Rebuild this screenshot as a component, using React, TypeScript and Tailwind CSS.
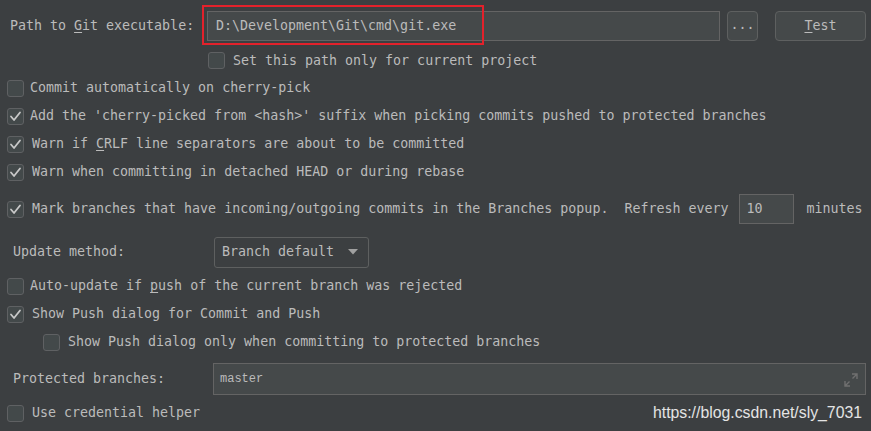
import React from 'react';

const mono = { fontFamily: '"DejaVu Sans Mono", "Liberation Mono", monospace' };

const Check: React.FC<{ checked?: boolean }> = ({ checked }) => (
  <span className="flex h-[17px] w-[17px] shrink-0 items-center justify-center rounded-[3px] border border-[#5f6163] bg-[#43494a]">
    {checked && (
      <svg width="13" height="13" viewBox="0 0 13 13">
        <path d="M2 6.5 L5 10 L11 2.5" fill="none" stroke="#c8c8c8" strokeWidth="1.8" strokeLinecap="round" strokeLinejoin="round" />
      </svg>
    )}
  </span>
);

const CheckRow: React.FC<{ checked?: boolean; gap?: string; className?: string; children: React.ReactNode }> = ({
  checked,
  gap = 'gap-[6px]',
  className = 'h-[28px] pl-[7px]',
  children,
}) => (
  <div className={`flex items-center ${gap} ${className}`}>
    <Check checked={checked} />
    <span className="whitespace-pre">{children}</span>
  </div>
);

const App: React.FC = () => {
  return (
    <div className="h-[431px] w-[871px] overflow-hidden bg-[#3c3f41] text-[13.3px] leading-none text-[#bbbbbb]" style={mono}>
      {/* git path */}
      <div className="relative mt-[11px] flex h-[30px] items-center">
        <span className="w-[207px] shrink-0 pl-[10px] whitespace-pre">
          Path to <u className="underline-offset-2">G</u>it executable:
        </span>
        <div className="flex h-[30px] w-[513px] items-center border border-[#646464] bg-[#45494a] pl-[8px]">
          D:\Development\Git\cmd\git.exe
        </div>
        <button className="ml-[7px] h-[30px] w-[31px] rounded-[4px] border border-[#5e6060] bg-[#45494a] pb-[2px] text-[#bbbbbb]">
          ...
        </button>
        <button className="ml-[17px] h-[30px] w-[91px] rounded-[4px] border border-[#5e6060] bg-[#45494a] text-[#bbbbbb]">
          <u className="underline-offset-2">T</u>est
        </button>
        <div className="absolute left-[202px] top-[-6px] h-[40px] w-[282px] border-2 border-[#e3212b]" />
      </div>

      <CheckRow className="mt-[6px] h-[27px] pl-[208px]" gap="gap-[8px]">
        Set this path only for current project
      </CheckRow>

      <CheckRow>Commit automatically on cherry-pick</CheckRow>
      <CheckRow checked>Add the 'cherry-picked from &lt;hash&gt;' suffix when picking commits pushed to protected branches</CheckRow>
      <CheckRow checked gap="gap-[8px]">
        Warn if <u className="underline-offset-2">C</u>RLF line separators are about to be committed
      </CheckRow>
      <CheckRow checked gap="gap-[8px]">
        Warn when committing in detached HEAD or during rebase
      </CheckRow>

      <div className="flex h-[46px] items-center gap-[8px] pl-[7px]">
        <Check checked />
        <span className="whitespace-pre">Mark branches that have incoming/outgoing commits in the Branches popup.  Refresh every</span>
        <div className="ml-[3px] flex h-[30px] w-[55px] items-start border border-[#646464] bg-[#45494a] pl-[6px] pt-[7px]">10</div>
        <span className="ml-[4px]">minutes</span>
      </div>

      <div className="flex h-[40px] items-center">
        <span className="w-[214px] pl-[13px]">Update method:</span>
        <div className="flex h-[31px] w-[155px] items-center justify-between rounded-[3px] border border-[#5e6060] bg-[#3c3f41] pl-[7px] pr-[10px]">
          <span>Branch default</span>
          <svg width="10" height="6" viewBox="0 0 10 6">
            <path d="M0 0 H10 L5 5.5 Z" fill="#a0a0a0" />
          </svg>
        </div>
      </div>

      <CheckRow>
        Auto-update if <u className="underline-offset-2">p</u>ush of the current branch was rejected
      </CheckRow>
      <CheckRow checked gap="gap-[8px]">
        Show Push dialog for Commit and Push
      </CheckRow>
      <CheckRow className="h-[28px] pl-[43px]" gap="gap-[8px]">
        Show Push dialog only when committing to protected branches
      </CheckRow>

      <div className="flex h-[46px] items-center">
        <span className="w-[213px] pl-[13px]">Protected branches:</span>
        <div className="relative flex h-[32px] w-[653px] items-center border border-[#646464] bg-[#45494a] pl-[6px] text-[12px] text-[#bbbbbb]" style={{ fontFamily: '"Liberation Mono", monospace' }}>
          master
          <svg className="absolute bottom-[6px] right-[6px]" width="16" height="16" viewBox="0 0 16 16">
            <path d="M9 2 H14 V7 M14 2 L9.5 6.5 M7 14 H2 V9 M2 14 L6.5 9.5" fill="none" stroke="#707070" strokeWidth="1.4" />
          </svg>
        </div>
      </div>

      <div className="flex h-[22px] items-center justify-between pr-[9px]">
        <CheckRow gap="gap-[8px]" className="h-[22px] pl-[7px]">
          Use credential helper
        </CheckRow>
        <span className="text-[15.8px] text-[#e4e4e4]" style={{ fontFamily: '"Liberation Sans", Arial, sans-serif' }}>
          https://blog.csdn.net/sly_7031
        </span>
      </div>
    </div>
  );
};

export default App;
